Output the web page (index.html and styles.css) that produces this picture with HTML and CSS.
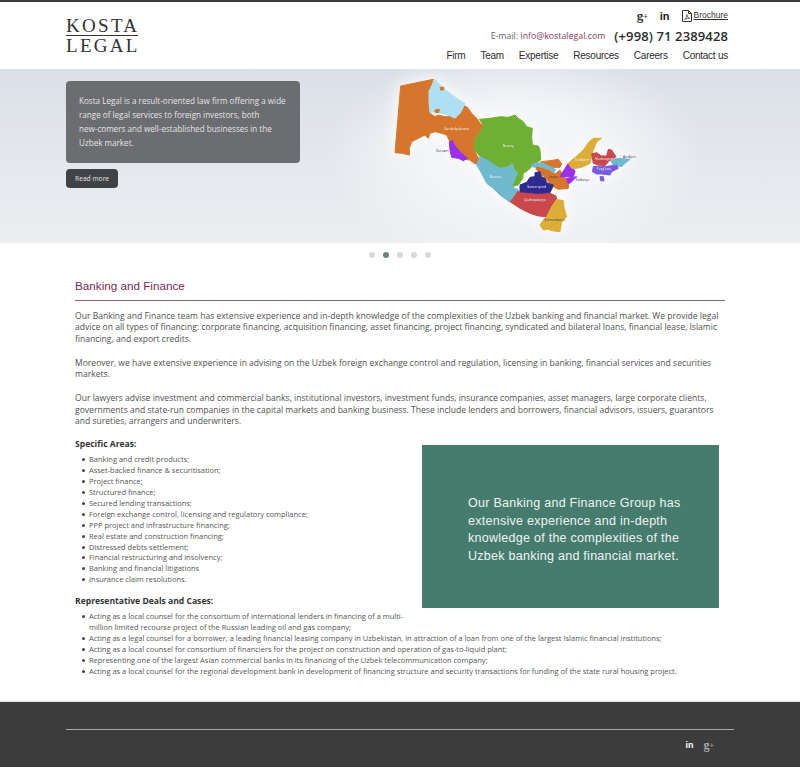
FILE: index.html
```html
<!DOCTYPE html>
<html lang="en">
<head>
<meta charset="utf-8">
<title>Kosta Legal - Banking and Finance</title>
<link rel="stylesheet" href="styles.css">
</head>
<body>
<header class="site-header">
  <div class="header-inner">
    <a class="logo" href="#"><span class="logo-top">KOSTA</span><span class="logo-bottom">LEGAL</span></a>
    <div class="header-right">
      <div class="social-row">
        <span class="gplus">g<sup>+</sup></span>
        <span class="linkedin">in</span>
        <svg class="pdf-icon" width="10" height="12" viewBox="0 0 10 12"><path d="M.5.5h6l3 3v8H.5z M6.500.5v3h3" fill="none" stroke="#333" stroke-width="1"/><path d="M2.500 9.500c1.500-1 2.500-3 2.300-5 .5 2 1.300 3.500 3 4-1.500-.2-3.500 0-5.300 1z" fill="none" stroke="#333" stroke-width=".7"/></svg>
        <a class="brochure" href="#">Brochure</a>
      </div>
      <div class="contact-row">
        <span class="email">E-mail: <a href="#">info@kostalegal.com</a></span>
        <span class="phone">(+998) 71 2389428</span>
      </div>
      <nav class="main-nav">
        <a href="#">Firm</a><a href="#">Team</a><a href="#">Expertise</a><a href="#">Resources</a><a href="#">Careers</a><a href="#">Contact us</a>
      </nav>
    </div>
  </div>
</header>

<section class="hero">
  <div class="hero-inner">
    <div class="hero-copy">
      <p class="hero-text">Kosta Legal is a result-oriented law firm offering a wide range of legal services to foreign investors, both<br>new-comers and well-established businesses in the Uzbek market.</p>
      <a class="read-more" href="#">Read more</a>
    </div>
    <svg class="map" width="270" height="170" viewBox="0 0 810 510">
      <g class="regions">
        <polygon class="r-orange" points="62,48 160,28 150,55 148,100 150,130 165,140 175,135 195,140 230,135 245,120 250,105 262,112 275,130 290,145 300,160 312,170 300,185 288,205 285,215 282,235 290,255 302,275 285,282 270,270 250,268 225,250 208,212 200,195 185,190 165,185 150,190 145,205 135,195 115,205 95,215 88,235 88,255 65,250 45,248"/>
        <polygon class="r-sky" points="165,28 185,50 210,70 235,88 255,100 247,118 240,130 225,145 205,135 190,132 175,128 165,125 150,128 147,100 147,62 155,50"/>
        <polygon class="r-orange" points="180,52 192,52 190,60 182,60"/>
        <polygon class="r-orange" points="165,120 178,118 176,128 166,128"/>
        <polygon class="r-green" points="298,148 330,145 360,140 385,142 405,135 415,145 430,155 440,170 457,175 455,200 457,225 475,228 480,240 482,270 465,280 455,290 445,300 430,310 428,325 415,345 395,350 405,325 412,310 400,295 398,282 380,292 360,295 345,285 320,270 300,260 282,235 287,205 312,170"/>
        <polygon class="r-blue" points="300,260 330,275 345,287 360,295 380,292 398,282 402,298 412,310 405,325 395,350 415,360 412,375 400,385 388,395 360,375 340,355 320,340 305,310 290,285"/>
        <polygon class="r-purple" points="208,215 218,212 225,228 240,245 262,265 250,272 235,265 215,262 210,240"/>
        <polygon class="r-orange" points="465,285 490,295 510,300 525,312 540,300 550,320 565,330 565,355 535,358 520,350 495,325 470,300"/>
        <polygon class="r-orange" points="482,275 510,272 535,268 545,282 540,292 515,292 490,295"/>
        <polygon class="r-blue" points="455,285 470,278 490,280 510,290 527,298 522,308 505,298 488,292 472,288 460,292"/>
        <polygon class="r-red" points="412,365 470,368 510,370 528,378 530,388 515,410 500,440 475,438 450,430 420,415 390,395 405,378"/>
        <polygon class="r-navy" points="420,345 440,337 450,322 465,320 465,308 480,305 485,322 495,325 500,338 520,345 515,358 510,368 470,370 420,365"/>
        <polygon class="r-yellow" points="530,388 550,392 552,412 560,440 545,455 540,485 515,482 505,478 490,480 480,465 490,450 500,440 515,410"/>
        <polygon class="r-purple" points="565,280 578,290 585,305 580,320 555,320 540,320 552,300"/>
        <polygon class="r-purple" points="560,325 590,320 578,332 570,340 562,338"/>
        <polygon class="r-yellow" points="570,275 590,258 610,240 625,218 640,205 665,205 650,215 640,240 635,260 630,280 605,292 590,295 575,295 565,280"/>
        <polygon class="r-blue" points="690,270 712,265 750,268 735,280 725,290 700,285"/>
        <polygon class="r-red" points="635,252 650,248 665,258 680,258 685,238 695,240 708,260 690,270 675,287 655,285 640,280"/>
        <polygon class="r-violet" points="640,290 655,288 675,290 710,285 715,295 695,305 690,315 665,312 650,312 637,305"/>
        <polygon class="r-violet" points="660,320 670,320 672,333 662,332"/>
      </g>
      <g class="labels-light">
        <text x="230" y="179">Karakalpakstan</text>
        <text x="385" y="230">Navoiy</text>
        <text x="347" y="323">Buxoro</text>
        <text x="470" y="354">Samarqand</text>
        <text x="465" y="392">Qashqadaryo</text>
        <text x="605" y="273">Toshkent</text>
        <text x="672" y="269">Namangan</text>
        <text x="672" y="301">Farg'ona</text>
      </g>
      <g class="labels-dark">
        <text x="187" y="247">Xorazm</text>
        <text x="525" y="454">Surxondaryo</text>
        <text x="520" y="323">Jizzax</text>
        <text x="608" y="334">Sirdaryo</text>
        <text x="748" y="264">Andijon</text>
      </g>
    </svg>
  </div>
</section>

<div class="dots">
  <span class="dot"></span><span class="dot dot-active"></span><span class="dot"></span><span class="dot"></span><span class="dot"></span>
</div>

<main class="content">
  <h1 class="page-title">Banking and Finance</h1>
  <p class="para">Our Banking and Finance team has extensive experience and in-depth knowledge of the complexities of the Uzbek banking and financial market. We provide legal advice on all types of financing: corporate financing, acquisition financing, asset financing, project financing, syndicated and bilateral loans, financial lease, Islamic financing, and export credits.</p>
  <p class="para">Moreover, we have extensive experience in advising on the Uzbek foreign exchange control and regulation, licensing in banking, financial services and securities markets.</p>
  <p class="para para-last">Our lawyers advise investment and commercial banks, institutional investors, investment funds, insurance companies, asset managers, large corporate clients, governments and state-run companies in the capital markets and banking business. These include lenders and borrowers, financial advisors, issuers, guarantors and sureties, arrangers and underwriters.</p>

  <aside class="callout">Our Banking and Finance Group has extensive experience and in-depth knowledge of the complexities of the Uzbek banking and financial market.</aside>

  <h2 class="sub-title">Specific Areas:</h2>
  <ul class="list">
    <li>Banking and credit products;</li>
    <li>Asset-backed finance &amp; securitisation;</li>
    <li>Project finance;</li>
    <li>Structured finance;</li>
    <li>Secured lending transactions;</li>
    <li>Foreign exchange control, licensing and regulatory compliance;</li>
    <li>PPP project and infrastructure financing;</li>
    <li>Real estate and construction financing;</li>
    <li>Distressed debts settlement;</li>
    <li>Financial restructuring and insolvency;</li>
    <li>Banking and financial litigations</li>
    <li>Insurance claim resolutions.</li>
  </ul>
  <h2 class="sub-title sub-title-second">Representative Deals and Cases:</h2>
  <ul class="list">
    <li>Acting as a local counsel for the consortium of international lenders in financing of a multi-million limited recourse project of the Russian leading oil and gas company;</li>
    <li>Acting as a legal counsel for a borrower, a leading financial leasing company in Uzbekistan, in attraction of a loan from one of the largest Islamic financial institutions;</li>
    <li>Acting as a local counsel for consortium of financiers for the project on construction and operation of gas-to-liquid plant;</li>
    <li>Representing one of the largest Asian commercial banks in its financing of the Uzbek telecommunication company;</li>
    <li>Acting as a local counsel for the regional development bank in development of financing structure and security transactions for funding of the state rural housing project.</li>
  </ul>
</main>

<footer class="site-footer">
  <div class="footer-inner">
    <span class="linkedin linkedin-footer">in</span>
    <span class="gplus gplus-footer">g<sup>+</sup></span>
  </div>
</footer>
</body>
</html>
```
FILE: styles.css
```css
* { box-sizing: border-box; }
html, body { margin: 0; padding: 0; }
body {
  background: #fff;
  color: #505050;
  font-family: "Open Sans", "Noto Sans", sans-serif;
  font-size: 8.570px;
  height: 768px;
  overflow: hidden;
}
a { color: inherit; text-decoration: none; }

.site-header {
  height: 69px;
  border-top: 2px solid #3c3c3c;
  background: #fff;
}
.header-inner {
  width: 668px;
  margin: 0 auto;
  padding-right: 6px;
  display: flex;
  justify-content: space-between;
}
.logo {
  display: flex;
  flex-direction: column;
  width: 72px;
  margin-top: 16px;
  color: #333;
  font-family: "Liberation Serif", serif;
  font-size: 19px;
  line-height: 16px;
  letter-spacing: 2.300px;
}
.logo-top { border-bottom: 1px solid #333; height: 18px; white-space: nowrap; }
.logo-bottom { white-space: nowrap; margin-top: 2px; }

.header-right {
  display: flex;
  flex-direction: column;
  align-items: flex-end;
}
.social-row {
  display: flex;
  align-items: center;
  height: 14px;
  margin-top: 7px;
}
.gplus {
  font-family: "Liberation Serif", serif;
  font-weight: bold;
  font-size: 13px;
  color: #333;
  line-height: 12px;
}
.gplus sup { font-size: 8px; vertical-align: 1px; line-height: 0; }
.linkedin {
  font-family: "Liberation Sans", sans-serif;
  font-weight: bold;
  font-size: 11px;
  color: #222;
  margin-left: 12px;
  line-height: 12px;
}
.pdf-icon { margin-left: 12px; }
.brochure {
  margin-left: 2px;
  padding-bottom: 2px;
  font-family: "Liberation Sans", sans-serif;
  font-size: 8.500px;
  color: #333;
  text-decoration: underline;
}
.contact-row {
  display: flex;
  align-items: center;
  height: 20px;
  margin-top: 3px;
}
.email { font-size: 8.800px; color: #666; }
.email a { color: #8a3a63; }
.phone {
  margin-left: 9px;
  font-size: 13px;
  font-weight: 600;
  letter-spacing: .12px;
  color: #2c2c2c;
}
.main-nav {
  display: flex;
  gap: 15px;
  margin-top: 3px;
  font-family: "Liberation Sans", sans-serif;
  font-size: 10px;
  letter-spacing: -.25px;
  line-height: 13px;
  color: #2c2c2c;
}

.hero {
  height: 174px;
  background:
    radial-gradient(ellipse 190px 110px at 515px 88px, #f4f5f7 45%, rgba(244,245,247,0) 100%),
    linear-gradient(#dbe0e8, #eceef1);
}
.hero-inner {
  width: 668px;
  margin: 0 auto;
  display: flex;
}
.hero-copy {
  width: 234px;
  padding-top: 12px;
}
.hero-text {
  margin: 0;
  height: 82px;
  padding: 13px 13px;
  border-radius: 4px;
  background: #6b6d70;
  color: #e4e4e4;
  font-size: 8.100px;
  line-height: 14px;
}
.read-more {
  display: inline-block;
  margin-top: 6px;
  height: 19px;
  padding: 0 9px;
  border-radius: 4px;
  background: #404245;
  color: #e6e6e6;
  font-size: 6.700px;
  line-height: 19px;
}
.map {
  display: block;
  margin-left: 80px;
  margin-top: 1px;
  flex: none;
  filter: drop-shadow(0 0 8px #fff);
}
.regions polygon { stroke-width: 3; stroke-linejoin: round; }
.r-orange { fill: #d6762c; stroke: #d6762c; }
.r-sky { fill: #aedff2; stroke: #aedff2; }
.r-green { fill: #6fb034; stroke: #6fb034; }
.r-blue { fill: #6fbacf; stroke: #6fbacf; }
.r-purple { fill: #9b2ff0; stroke: #9b2ff0; }
.r-red { fill: #c9484c; stroke: #c9484c; }
.r-navy { fill: #2f2a8f; stroke: #2f2a8f; }
.r-yellow { fill: #dcae38; stroke: #dcae38; }
.r-violet { fill: #7a5be0; stroke: #7a5be0; }
.map text {
  font-family: "Open Sans", sans-serif;
  font-size: 10.500px;
  text-anchor: middle;
}
.labels-light { fill: #f2f2f2; }
.labels-dark { fill: #444; }

.dots {
  display: flex;
  justify-content: center;
  gap: 8px;
  height: 22px;
  padding-top: 9px;
}
.dot {
  width: 6px;
  height: 6px;
  border-radius: 50%;
  background: #d6d9da;
}
.dot-active { background: #6f8580; }

.content {
  width: 650px;
  margin: 0 auto;
  height: 436px;
  line-height: 11.750px;
}
.page-title {
  margin: 0;
  padding: 13px 0 7px;
  height: 36px;
  border-bottom: 1px solid #96607c;
  font-family: "Liberation Sans", sans-serif;
  font-weight: normal;
  font-size: 11.700px;
  line-height: 15px;
  color: #7d2a55;
}
.para { margin: 0 0 11.750px; }
.para:first-of-type { margin-top: 9.500px; }
.para-last { margin-bottom: 10.250px; }
.callout {
  float: right;
  width: 297px;
  height: 163px;
  margin: 7px 6px 10px 16px;
  padding: 50px 30px 0 46px;
  background: #467c6e;
  color: #eef3f1;
  font-family: "Liberation Sans", sans-serif;
  font-size: 12.500px;
  line-height: 17.500px;
  letter-spacing: .27px;
}
.sub-title {
  margin: 0 0 4px;
  font-size: 8.570px;
  font-weight: bold;
  line-height: 12px;
  color: #333;
}
.sub-title-second { margin-top: 10px; }
.list {
  list-style: none;
  margin: 0;
  padding: 0 0 0 14px;
  font-size: 7.470px;
  line-height: 10.900px;
  color: #555;
}
.list li { position: relative; }
.list li::before {
  content: "";
  position: absolute;
  left: -7px;
  top: 4px;
  width: 3px;
  height: 3px;
  border-radius: 50%;
  background: #444;
}

.site-footer {
  height: 66px;
  background: #3c3c3c;
  border-top: 1px solid #ddd;
}
.footer-inner {
  width: 668px;
  margin: 27px auto 0;
  padding: 9px 20px 0 0;
  border-top: 1px solid #a8a8a8;
  display: flex;
  justify-content: flex-end;
  align-items: center;
}
.linkedin-footer { color: #fff; font-size: 9px; margin: 0; }
.gplus-footer { color: #aaa; font-size: 12px; margin-left: 10px; }
```
